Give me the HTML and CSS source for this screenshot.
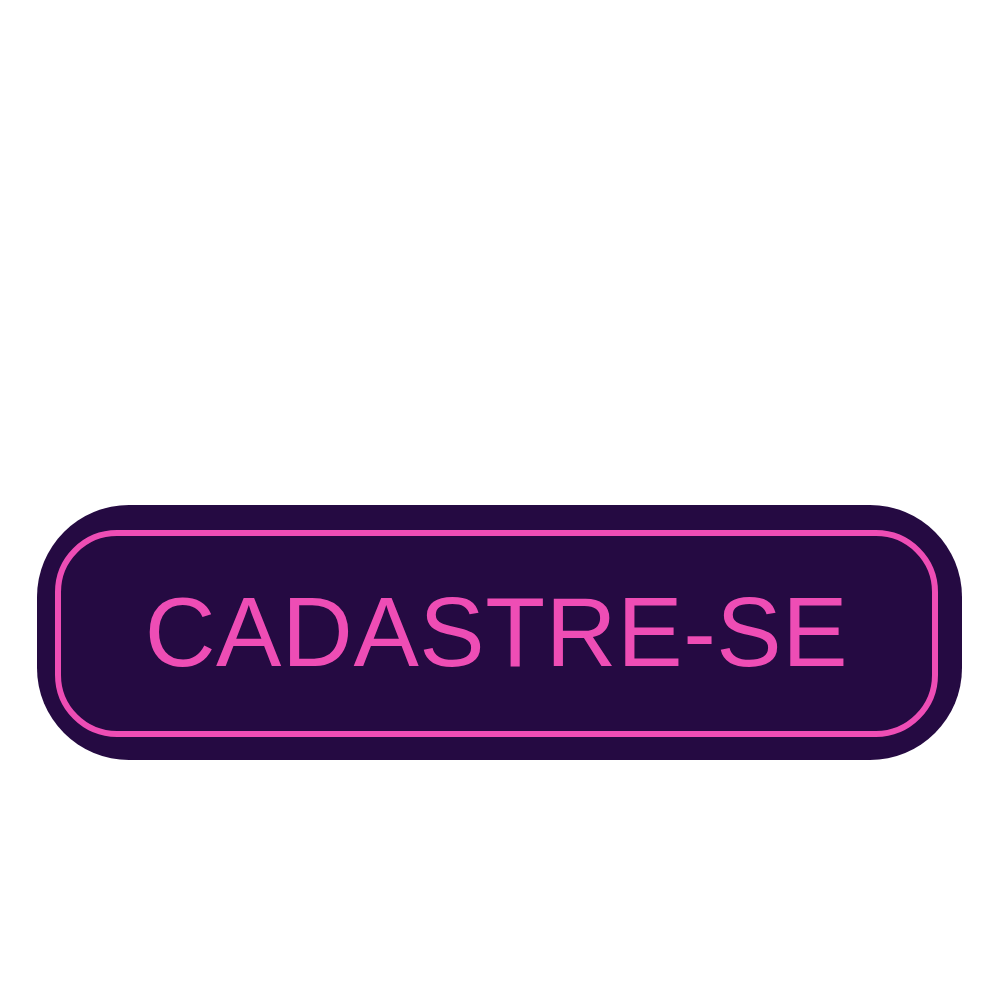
FILE: index.html
```html
<!DOCTYPE html>
<html lang="pt">
<head>
<meta charset="utf-8">
<title>Cadastre-se</title>
<link rel="stylesheet" href="styles.css">
</head>
<body>
<main class="page">
  <a class="signup" href="#">
    <span class="signup-inner">
      <span class="signup-label">CADASTRE-SE</span>
    </span>
  </a>
</main>
</body>
</html>
```
FILE: styles.css
```css
html, body {
  margin: 0;
  padding: 0;
  background: #ffffff;
}

.page {
  width: 1000px;
  height: 1000px;
  padding: 505px 0 0 37px;
  box-sizing: border-box;
}

.signup {
  display: flex;
  box-sizing: border-box;
  width: 925px;
  height: 255px;
  padding: 25px 24px 23px 18px;
  background: #250a42;
  border-radius: 92px;
  text-decoration: none;
}

.signup-inner {
  flex: 1;
  display: flex;
  align-items: center;
  justify-content: center;
  border: 6px solid #ee4db5;
  border-radius: 62px;
  padding-bottom: 4px;
  box-sizing: border-box;
}

.signup-label {
  font-family: "Liberation Sans", Arial, sans-serif;
  font-size: 98px;
  line-height: 1;
  letter-spacing: 0.6px;
  color: #ee4db5;
  white-space: nowrap;
}
```
